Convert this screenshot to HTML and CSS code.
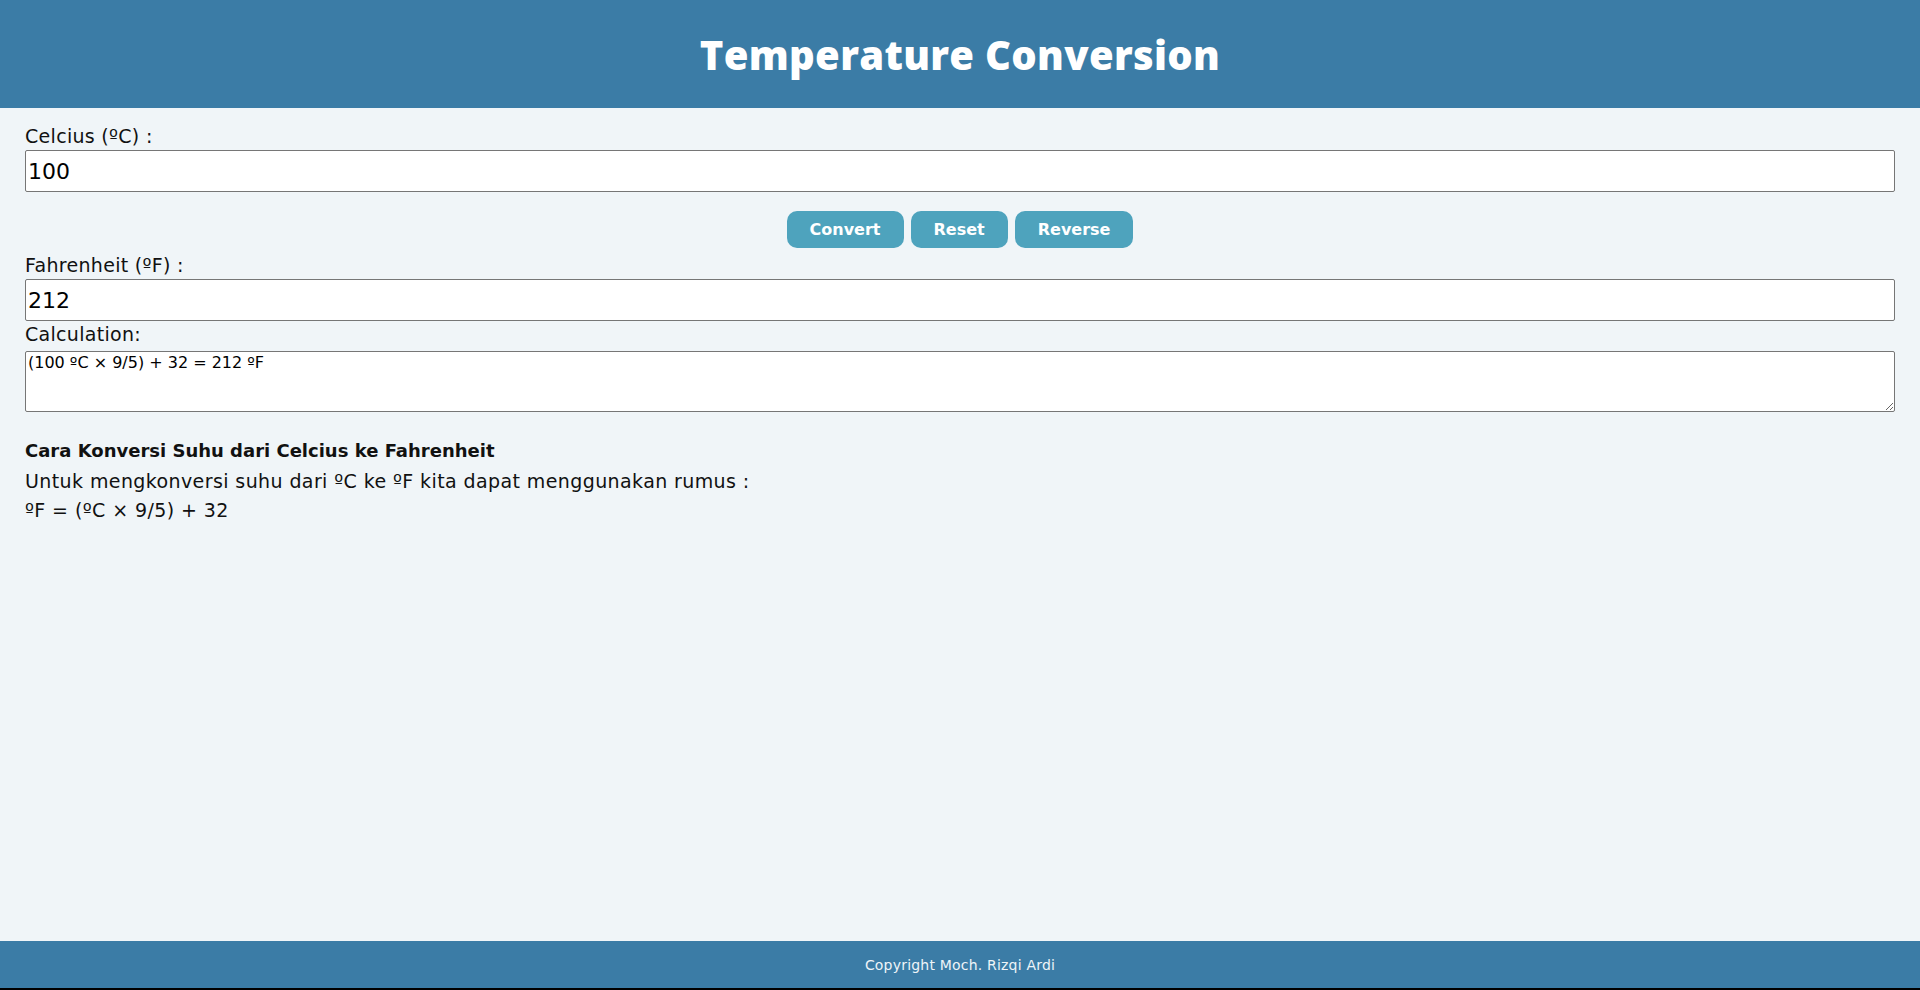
FILE: index.html
```html
<!DOCTYPE html>
<html lang="id">
<head>
<meta charset="utf-8">
<title>Temperature Conversion</title>
<link rel="stylesheet" href="styles.css">
</head>
<body>
<div class="page">
  <header class="top">
    <h1 class="title">Temperature Conversion</h1>
  </header>
  <main class="content">
    <label class="label" for="c">Celcius (ºC) :</label>
    <input class="field" id="c" type="text" value="100">
    <div class="actions">
      <button class="btn">Convert</button>
      <button class="btn">Reset</button>
      <button class="btn">Reverse</button>
    </div>
    <label class="label" for="f">Fahrenheit (ºF) :</label>
    <input class="field" id="f" type="text" value="212">
    <label class="label" for="calc">Calculation:</label>
    <textarea class="calc" id="calc">(100 ºC × 9/5) + 32 = 212 ºF</textarea>
    <section class="info">
      <h2 class="info-title">Cara Konversi Suhu dari Celcius ke Fahrenheit</h2>
      <p class="info-text info-first">Untuk mengkonversi suhu dari ºC ke ºF kita dapat menggunakan rumus :</p>
      <p class="info-text">ºF = (ºC × 9/5) + 32</p>
    </section>
  </main>
  <footer class="bottom">Copyright Moch. Rizqi Ardi</footer>
</div>
</body>
</html>
```
FILE: styles.css
```css
html, body {
  margin: 0;
  padding: 0;
}
body {
  font-family: "DejaVu Sans", "Liberation Sans", sans-serif;
  color: #111;
  background: #f0f5f8;
}
.page {
  min-height: 100vh;
  display: flex;
  flex-direction: column;
}
.top {
  height: 108px;
  background: #3b7ca6;
  display: flex;
  align-items: center;
  justify-content: center;
}
.title {
  margin: 0;
  color: #fff;
  font-family: "Open Sans", "DejaVu Sans", sans-serif;
  font-size: 40px;
  font-weight: 800;
  letter-spacing: 0.3px;
}
.content {
  flex: 1;
  padding: 15px 25px 0;
  display: flex;
  flex-direction: column;
}
.label {
  display: block;
  font-size: 19px;
  line-height: 27px;
  letter-spacing: 0.3px;
}
.field {
  box-sizing: border-box;
  width: 100%;
  height: 42px;
  margin: 0;
  padding: 0 2px;
  border: 1px solid #767676;
  border-radius: 2px;
  background: #fff;
  font-family: inherit;
  font-size: 22px;
  color: #000;
}
.actions {
  display: flex;
  justify-content: center;
  gap: 7px;
  margin: 19px 0 4px;
}
.btn {
  height: 37px;
  padding: 0 23px;
  border: none;
  border-radius: 10px;
  background: #4ea3bd;
  color: #fff;
  font-family: inherit;
  font-weight: 700;
  font-size: 16px;
}
.calc {
  display: block;
  box-sizing: border-box;
  width: 100%;
  height: 61px;
  margin: 3px 0 0;
  padding: 1px 2px;
  border: 1px solid #767676;
  border-radius: 2px;
  background: #fff;
  font-family: inherit;
  font-size: 16px;
  color: #000;
}
.info {
  margin-top: 25px;
}
.info-title {
  margin: 0;
  font-size: 18px;
  line-height: 27px;
  font-weight: 700;
}
.info-text {
  margin: 2px 0 0;
  font-size: 19px;
  line-height: 27px;
  letter-spacing: 0.4px;
}
.info-first {
  margin-top: 4px;
}
.bottom {
  height: 47px;
  background: #3b7ca6;
  color: #eef4f8;
  font-size: 14px;
  letter-spacing: 0.2px;
  display: flex;
  align-items: center;
  justify-content: center;
  border-bottom: 2px solid #000;
}
```
